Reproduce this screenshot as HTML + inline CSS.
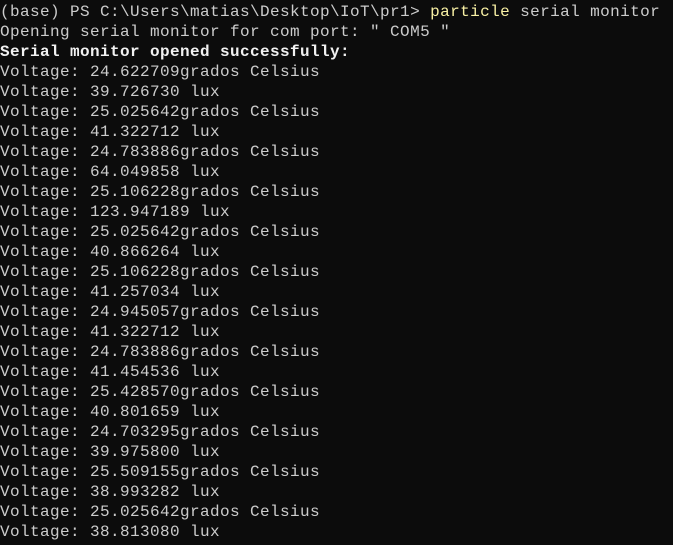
<!DOCTYPE html>
<html><head><style>
html,body{margin:0;padding:0;background:#0c0c0c;width:673px;height:545px;overflow:hidden}
pre{margin:0;padding:2px 0 0 0;font-family:"Liberation Mono",monospace;font-size:16px;letter-spacing:0.4px;line-height:20px;color:#cccccc;white-space:pre}
.y{color:#f9f1a5}
b{color:#f2f2f2}
</style></head><body><pre>(base) PS C:\Users\matias\Desktop\IoT\pr1&gt; <span class="y">particle</span> serial monitor
Opening serial monitor for com port: " COM5 "
<b>Serial monitor opened successfully:</b>
Voltage: 24.622709grados Celsius
Voltage: 39.726730 lux
Voltage: 25.025642grados Celsius
Voltage: 41.322712 lux
Voltage: 24.783886grados Celsius
Voltage: 64.049858 lux
Voltage: 25.106228grados Celsius
Voltage: 123.947189 lux
Voltage: 25.025642grados Celsius
Voltage: 40.866264 lux
Voltage: 25.106228grados Celsius
Voltage: 41.257034 lux
Voltage: 24.945057grados Celsius
Voltage: 41.322712 lux
Voltage: 24.783886grados Celsius
Voltage: 41.454536 lux
Voltage: 25.428570grados Celsius
Voltage: 40.801659 lux
Voltage: 24.703295grados Celsius
Voltage: 39.975800 lux
Voltage: 25.509155grados Celsius
Voltage: 38.993282 lux
Voltage: 25.025642grados Celsius
Voltage: 38.813080 lux
</pre></body></html>
